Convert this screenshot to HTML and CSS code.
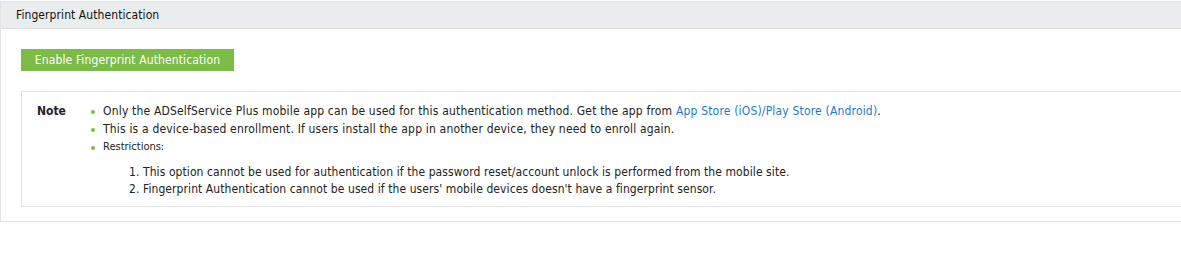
FILE: index.html
```html
<!DOCTYPE html>
<html>
<head>
<meta charset="utf-8">
<link rel="stylesheet" href="styles.css">
</head>
<body>
<div class="panel">
  <div class="panel-head">Fingerprint Authentication</div>
  <div class="panel-body">
    <button class="btn-enable">Enable Fingerprint Authentication</button>
    <div class="note">
      <div class="note-label">Note</div>
      <ul class="note-list">
        <li>Only the ADSelfService Plus mobile app can be used for this authentication method. Get the app from <a href="#">App Store (iOS)/Play Store (Android)</a>.</li>
        <li>This is a device-based enrollment. If users install the app in another device, they need to enroll again.</li>
        <li class="small">Restrictions:
          <ol class="restrict">
            <li>This option cannot be used for authentication if the password reset/account unlock is performed from the mobile site.</li>
            <li>Fingerprint Authentication cannot be used if the users' mobile devices doesn't have a fingerprint sensor.</li>
          </ol>
        </li>
      </ul>
    </div>
  </div>
</div>
</body>
</html>
```
FILE: styles.css
```css
html, body {
  margin: 0;
  padding: 0;
  background: #fff;
}
body {
  font-family: "DejaVu Sans Condensed", "DejaVu Sans", sans-serif;
  font-size: 12px;
  color: #222;
  padding-top: 1px;
}
.panel {
  border: 1px solid #e3e3e3;
  border-right: none;
  width: 1200px;
}
.panel-head {
  background: #eaedee;
  height: 26px;
  line-height: 26px;
  padding-left: 15px;
  border-bottom: 1px solid #dedede;
  color: #111;
  letter-spacing: 0.08px;
}
.panel-body {
  padding: 20px 0 14px 20px;
}
.btn-enable {
  display: block;
  border: none;
  background: #7dbb47;
  color: #fff;
  font-family: inherit;
  font-size: 12px;
  letter-spacing: 0.12px;
  width: 213px;
  height: 22px;
  padding: 0;
  margin: 0 0 20px 0;
  cursor: pointer;
}
.note {
  display: flex;
  border: 1px solid #e3e3e3;
  border-right: none;
  padding: 10px 0 8px 15px;
}
.note-label {
  font-weight: bold;
  width: 54px;
  line-height: 18px;
  color: #222;
}
.note-list {
  margin: 0;
  padding: 0;
  list-style: none;
}
.note-list > li {
  position: relative;
  padding-left: 12px;
  line-height: 18px;
  letter-spacing: 0.18px;
}
.note-list > li::before {
  content: "";
  position: absolute;
  left: 0;
  top: 8px;
  width: 4px;
  height: 4px;
  border-radius: 50%;
  background: #7dbb47;
}
.note-list > li.small {
  font-size: 11px;
  letter-spacing: 0;
}
.note-list a {
  color: #1d7ac9;
  text-decoration: none;
}
.restrict {
  margin: 8px 0 0 0;
  padding-left: 40px;
  font-size: 12px;
  letter-spacing: 0.08px;
}
.restrict li {
  line-height: 17px;
}
```
